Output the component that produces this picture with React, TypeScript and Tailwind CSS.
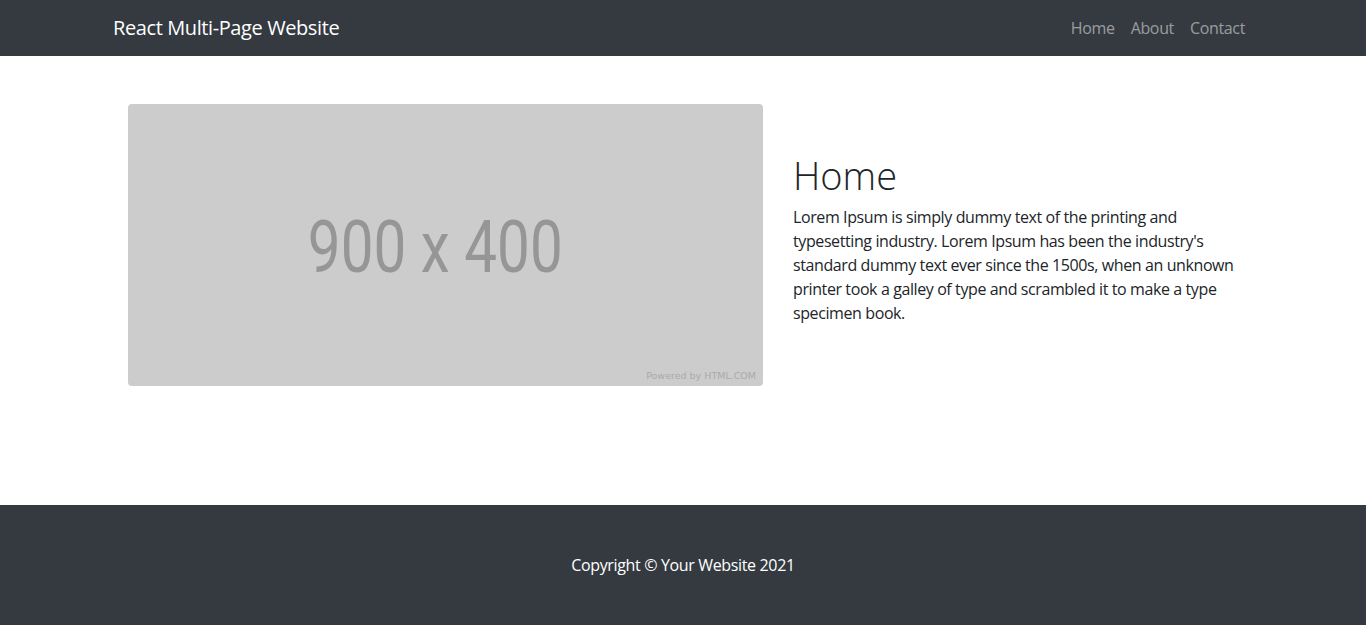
import React from "react";

const font = { fontFamily: '"Open Sans", "Noto Sans", Arial, sans-serif' };

function Navbar() {
  return (
    <nav className="bg-[#343a40] h-14">
      <div className="w-[1140px] mx-auto h-full flex items-center justify-between">
        <a className="text-white text-[20px] leading-[30px] tracking-[-0.4px] pb-px" href="#">
          React Multi-Page Website
        </a>
        <ul className="flex">
          {["Home", "About", "Contact"].map((l) => (
            <li key={l}>
              <a className="block px-2 text-[16px] leading-6 tracking-[-0.35px] text-white/50" href="#">
                {l}
              </a>
            </li>
          ))}
        </ul>
      </div>
    </nav>
  );
}

function Placeholder() {
  return (
    <div className="relative w-[635px] h-[282px] bg-[#cccccc] rounded-[4px] flex items-center justify-center">
      <span className="font-['Roboto'] text-[#969696] text-[73px] leading-none scale-x-[0.8] -translate-x-[10px] translate-y-[2px]">
        900 x 400
      </span>
      <span className="absolute right-[7px] bottom-[3px] text-[9.5px] text-[#aaaaaa] font-['DejaVu_Sans']">
        Powered by HTML.COM
      </span>
    </div>
  );
}

export default function App() {
  return (
    <div className="bg-white text-[#212529]" style={font}>
      <Navbar />
      <main className="w-[1140px] mx-auto px-[15px]">
        <div className="flex items-center mt-12 mb-[119px] -mx-[15px]">
          <div className="w-[665px] px-[15px]">
            <Placeholder />
          </div>
          <div className="w-[475px] px-[15px] pb-[14px]">
            <h1 className="text-[38px] font-light leading-[48px] mb-1.5">Home</h1>
            <p className="text-[16px] leading-6 tracking-[-0.4px]">
              Lorem Ipsum is simply dummy text of the printing and typesetting
              industry. Lorem Ipsum has been the industry's standard dummy text
              ever since the 1500s, when an unknown printer took a galley of
              type and scrambled it to make a type specimen book.
            </p>
          </div>
        </div>
      </main>
      <footer className="bg-[#343a40] h-[120px] flex items-center justify-center">
        <p className="text-white text-[16px] leading-6 tracking-[-0.35px] pb-px">
          Copyright © Your Website 2021
        </p>
      </footer>
    </div>
  );
}
